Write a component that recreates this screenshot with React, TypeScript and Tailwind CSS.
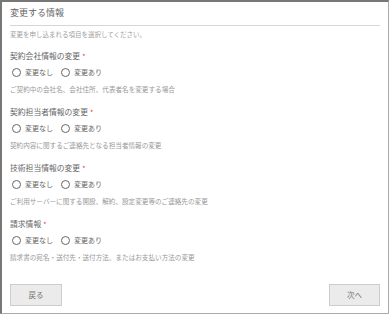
import React from "react";

const sections = [
  { label: "契約会社情報の変更", desc: "ご契約中の会社名、会社住所、代表者名を変更する場合" },
  { label: "契約担当者情報の変更", desc: "契約内容に関するご連絡先となる担当者情報の変更" },
  { label: "技術担当情報の変更", desc: "ご利用サーバーに関する開設、解約、設定変更等のご連絡先の変更" },
  { label: "請求情報", desc: "請求書の宛名・送付先・送付方法、またはお支払い方法の変更" },
];

function Radio({ text }: { text: string }) {
  return (
    <label className="flex items-center gap-[4px]">
      <span className="block w-[9px] h-[9px] rounded-full border border-[#666] bg-white" />
      <span className="text-[7px] leading-[10px] text-[#666]">{text}</span>
    </label>
  );
}

export default function App() {
  return (
    <div
      className="w-[390px] h-[315px] bg-white"
      style={{ fontFamily: '"Noto Sans CJK JP", "Noto Sans", sans-serif' }}
    >
      <div className="w-[389px] h-[314px] border-t-2 border-l-2 border-[#777] border-r border-r-[#aaa] border-b border-b-[#aaa] flex flex-col">
        <div className="pl-[8px] pr-[8px]">
          <div className="mt-[5px] text-[9px] leading-[12px] text-[#666]">変更する情報</div>
          <div className="mt-[6px] h-px bg-[#d6d6d6]" />
          <div className="mt-[3px] text-[6.5px] leading-[10px] text-[#a0a0a0]">
            変更を申し込まれる項目を選択してください。
          </div>
          <div className="mt-[12px]">
            {sections.map((s, i) => (
              <div key={i} className={i > 0 ? "mt-[13px]" : ""}>
                <div className="flex items-center gap-[2px] text-[7.8px] leading-[10px] text-[#666]">
                  <span>{s.label}</span>
                  <span className="text-[#e33] text-[7px]">*</span>
                </div>
                <div className="mt-[6px] h-[10px] flex items-center gap-[8px] pl-[2px]">
                  <Radio text="変更なし" />
                  <Radio text="変更あり" />
                </div>
                <div className="mt-[7px] text-[6.6px] leading-[10px] text-[#999]">{s.desc}</div>
              </div>
            ))}
          </div>
          <div className="mt-[22px] flex justify-between">
            <button className="w-[52px] h-[22px] bg-[#ebebeb] border border-[#cccccc] text-[7.5px] text-[#777]">
              戻る
            </button>
            <button className="w-[51px] h-[22px] bg-[#ebebeb] border border-[#cccccc] text-[7.5px] text-[#777]">
              次へ
            </button>
          </div>
        </div>
      </div>
    </div>
  );
}
